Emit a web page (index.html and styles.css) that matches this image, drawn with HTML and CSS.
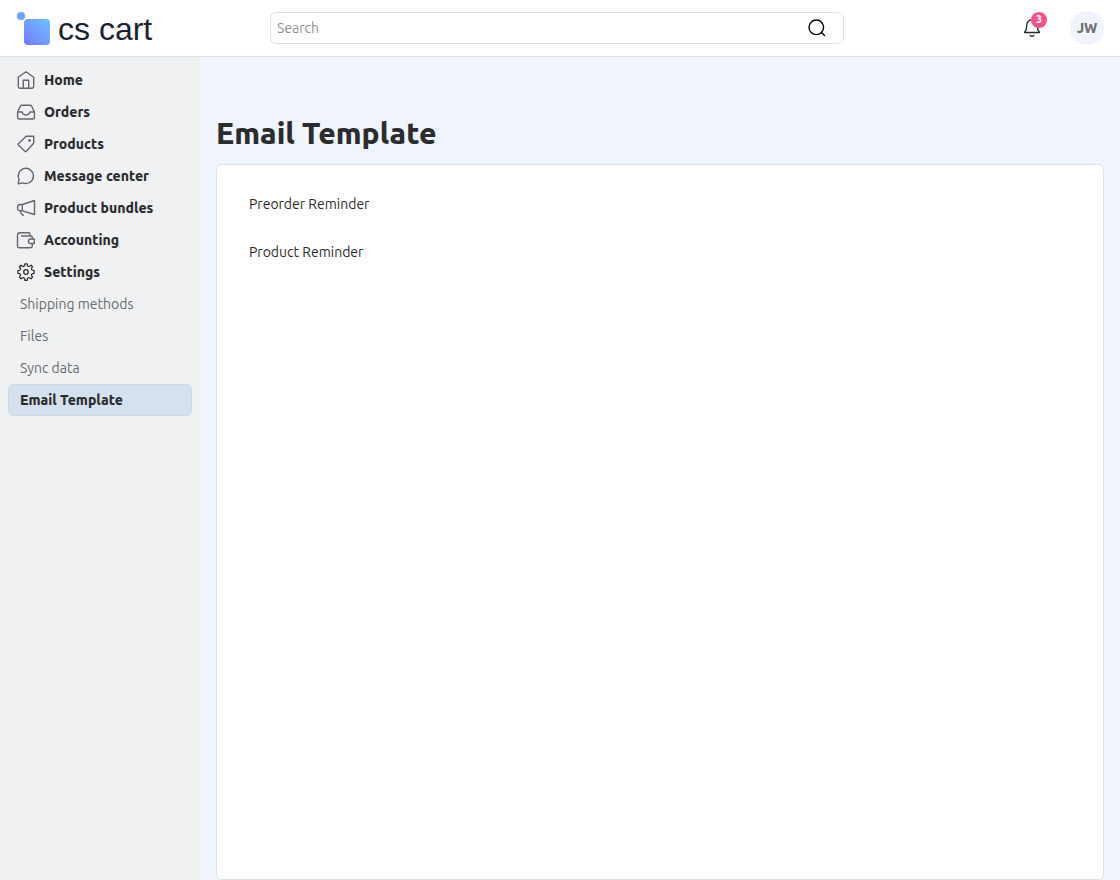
FILE: index.html
```
<!DOCTYPE html>
<html lang="en">
<head>
  <meta charset="UTF-8">
  <meta name="viewport" content="width=device-width, initial-scale=1">
  <title>Email Template</title>
  <link rel="stylesheet" href="styles.css">
</head>
<body>
  <header class="header">
    <a href="#" class="logo">
      <svg class="logo-mark" viewBox="0 0 34 34" aria-hidden="true">
        <defs>
          <linearGradient id="logoFill" x1="0" y1="1" x2="1" y2="0">
            <stop offset="0" stop-color="#7578ff"/>
            <stop offset="1" stop-color="#6fc3ff"/>
          </linearGradient>
        </defs>
        <circle cx="5" cy="4" r="4" fill="#729ffb"/>
        <rect x="8" y="7" width="26" height="26" rx="4" fill="url(#logoFill)"/>
      </svg>
      <span class="logo-text">cs cart</span>
    </a>

    <form class="search">
      <input type="search" class="search-input" placeholder="Search" aria-label="Search">
      <button type="submit" class="search-btn" aria-label="Find">
        <svg class="icon" viewBox="0 0 20 20"><circle cx="9.300" cy="9.300" r="7.300"/><path d="M14.500 14.500l3 3"/></svg>
      </button>
    </form>

    <div class="header-actions">
      <button type="button" class="bell-btn" aria-label="Notifications">
        <svg class="icon" viewBox="0 0 20 20"><path d="M2.500 14.500C4.200 12.800 4.700 11.500 4.700 7.800C4.700 4.300 6.800 1.800 10 1.800s5.300 2.500 5.300 6c0 3.700.5 5 2.200 6.700zM8.300 17.500c.9.900 2.500.9 3.400 0"/></svg>
        <span class="badge">3</span>
      </button>
      <button type="button" class="avatar">JW</button>
    </div>
  </header>

  <div class="layout">
    <nav class="sidebar">
      <a href="#" class="nav-item">
        <svg class="icon" viewBox="0 0 20 20"><path d="M2.300 7.300L10 1.700l7.700 5.600v9.300q0 1.700-1.700 1.700H4q-1.700 0-1.700-1.700zM7.300 18.300V10.200h5.400v8.100"/></svg>
        Home
      </a>
      <a href="#" class="nav-item">
        <svg class="icon" viewBox="0 0 20 20"><path d="M1.600 10L4.300 4.200q.5-1 1.600-1h8.200q1.100 0 1.600 1l2.700 5.800v5.200q0 1.800-1.800 1.800H3.400q-1.800 0-1.800-1.800zM1.600 10h4.600c.3 1.900 1.700 3 3.800 3s3.500-1.100 3.800-3h4.600"/></svg>
        Orders
      </a>
      <a href="#" class="nav-item">
        <svg class="icon" viewBox="0 0 20 20"><path d="M10.200 2.300h7.500v7L10.300 17.300q-.7.700-1.400 0L2.400 11.100q-.7-.7 0-1.400z"/><circle cx="13.500" cy="6.500" r="1" class="dot"/></svg>
        Products
      </a>
      <a href="#" class="nav-item">
        <svg class="icon" viewBox="0 0 20 20"><path d="M2.200 17.800l.8-4.500A7.600 7.600 0 1 1 6.800 16.900z"/></svg>
        Message center
      </a>
      <a href="#" class="nav-item">
        <svg class="icon" viewBox="0 0 20 20"><path d="M6.300 6.500L18.500 2.500v14L6.300 12.800H4.500C2.700 12.800 1.500 11.500 1.500 9.700s1.200-3.200 3-3.200zM6.300 6.500v6.300M4.300 13c.3 2.400 1.200 3.700 3 4.500"/></svg>
        Product bundles
      </a>
      <a href="#" class="nav-item">
        <svg class="icon" viewBox="0 0 20 20"><path d="M16.300 9V7.500q0-1.500-1.500-1.500H5.500M16.300 13.500v2.500q0 1.700-1.700 1.700H3.200q-1.700 0-1.700-1.700V5Q1.500 2.700 3.800 2.700h8.700q1.500 0 1.500 1.500V6M18.300 9v4.500h-3.600a2.200 2.200 0 0 1 0-4.500z"/></svg>
        Accounting
      </a>
      <a href="#" class="nav-item nav-item-open">
        <svg class="icon" viewBox="-1 -.5 22 22"><path d="M8.800 1.500h2.400q.3 2.500 1.200 2.900T15.500 3l1.700 1.700q-1.500 2-1.200 2.900t2.900 1.500v2.800q-2.500.4-2.900 1.300t1.200 3l-1.700 1.800q-2-1.600-3.100-1.200t-1.200 2.900H8.800q-.3-2.500-1.200-2.900T4.500 18l-1.700-1.800q1.600-2.100 1.200-3t-2.900-1.300V9.100q2.500-.5 2.900-1.500T2.800 4.700L4.500 3q2 1.700 3.100 1.400t1.200-2.900z"/><circle cx="10" cy="10.500" r="2.500"/></svg>
        Settings
      </a>
      <a href="#" class="sub-item">Shipping methods</a>
      <a href="#" class="sub-item">Files</a>
      <a href="#" class="sub-item">Sync data</a>
      <a href="#" class="sub-item active" aria-current="page">Email Template</a>
    </nav>

    <main class="content">
      <h1 class="page-title">Email Template</h1>
      <div class="card">
        <a href="#" class="card-link">Preorder Reminder</a>
        <a href="#" class="card-link">Product Reminder</a>
      </div>
    </main>
  </div>
</body>
</html>
```
FILE: styles.css
```
* {
  box-sizing: border-box;
}

body {
  display: flex;
  flex-direction: column;
  min-height: 100vh;
  margin: 0;
  background-color: #f0f4fd;
  color: #2b2c2e;
  font-family: Ubuntu, "Noto Sans", sans-serif;
  font-size: 14px;
  line-height: 20px;
}

a {
  color: inherit;
  text-decoration: none;
}

button {
  padding: 0;
  border: none;
  background: none;
  color: inherit;
  font: inherit;
  cursor: pointer;
}

.icon {
  display: block;
  flex: none;
  width: 20px;
  height: 20px;
  fill: none;
  stroke: currentColor;
  stroke-width: 1.4;
  stroke-linecap: round;
  stroke-linejoin: round;
}

.icon .dot {
  fill: currentColor;
  stroke-width: 1;
}

/* Header */
.header {
  display: grid;
  grid-template-columns: 254px 1fr 260px;
  align-items: center;
  height: 57px;
  padding: 0 16px;
  background-color: #fff;
  border-bottom: 1px solid #dde3ea;
}

.logo {
  display: flex;
  align-items: center;
  gap: 8px;
  padding-top: 2px;
  color: #1b1f33;
}

.logo-mark {
  width: 34px;
  height: 34px;
}

.logo-text {
  font-family: "Liberation Sans", Arial, sans-serif;
  font-size: 32px;
  line-height: 34px;
}

.search {
  display: flex;
  align-items: center;
  height: 32px;
  padding: 0 16px 0 6px;
  border: 1px solid #dde3ea;
  border-radius: 6px;
}

.search-input {
  flex: 1;
  min-width: 0;
  padding: 0;
  border: none;
  outline: none;
  background: none;
  color: inherit;
  font: inherit;
}

.search-input::placeholder {
  color: #929292;
}

.search-btn {
  color: #000;
}

.header-actions {
  display: flex;
  align-items: center;
  justify-content: flex-end;
  gap: 28px;
}

.bell-btn {
  position: relative;
}

.badge {
  position: absolute;
  top: -6px;
  right: -5px;
  width: 16px;
  height: 16px;
  border-radius: 50%;
  background-color: #f2508b;
  color: #fff;
  font-size: 10px;
  font-weight: 800;
  line-height: 16px;
  text-align: center;
}

.avatar {
  width: 34px;
  height: 34px;
  border-radius: 50%;
  background-color: #f0f4fd;
  color: #707070;
  font-weight: 800;
}

/* Sidebar */
.layout {
  display: flex;
  flex: 1;
}

.sidebar {
  flex: none;
  width: 200px;
  padding: 7px 8px;
  background-color: #eff1f3;
}

.nav-item,
.sub-item {
  display: flex;
  align-items: center;
  height: 32px;
  border: 1px solid transparent;
  border-radius: 6px;
}

.nav-item {
  gap: 8px;
  padding: 0 7px;
  font-weight: 800;
}

.nav-item .icon {
  color: #65676a;
}

.nav-item-open .icon {
  color: #2b2c2e;
}

.sub-item {
  padding: 0 11px;
  color: #6a6b6d;
}

.sub-item.active {
  border-color: #cbdae9;
  background-color: #d5e1ef;
  color: #2b2c2e;
  font-weight: 800;
}

/* Content */
.content {
  display: flex;
  flex: 1;
  flex-direction: column;
  padding: 56px 16px 0;
}

.page-title {
  margin: 0 0 11px;
  font-size: 30px;
  font-weight: 800;
  line-height: 40px;
}

.card {
  display: flex;
  flex: 1;
  flex-direction: column;
  align-items: flex-start;
  gap: 28px;
  padding: 29px 32px;
  border: 1px solid #dde3ea;
  border-radius: 6px;
  background-color: #fff;
}
```
